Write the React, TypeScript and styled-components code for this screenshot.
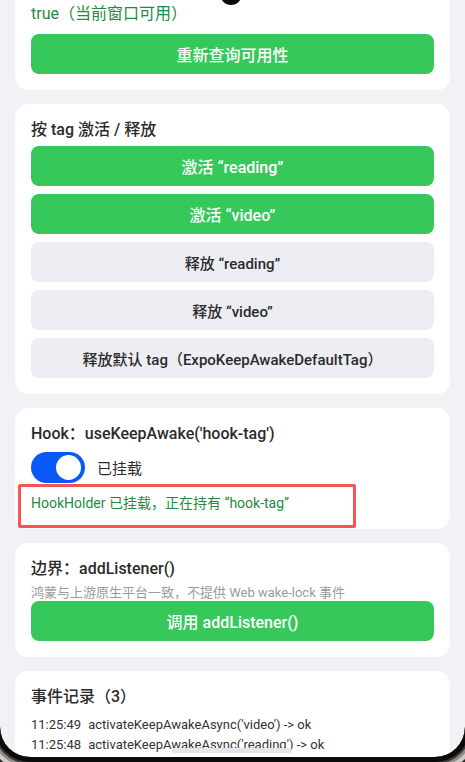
import React, { useState } from 'react';
import styled, { createGlobalStyle } from 'styled-components';

const GlobalStyle = createGlobalStyle`
  html, body {
    margin: 0;
    padding: 0;
    background: #f1f1f6;
    font-family: Roboto, "Noto Sans CJK SC", sans-serif;
    color: #333333;
    overflow: hidden;
  }
  * { box-sizing: border-box; }
`;

const logs = [
  { time: '11:25:49', text: "activateKeepAwakeAsync('video') -> ok" },
  { time: '11:25:48', text: "activateKeepAwakeAsync('reading') -> ok" },
  { time: '11:25:08', text: 'isAvailableAsync() -> true' },
];

const App: React.FC = () => {
  const [mounted, setMounted] = useState<boolean>(true);

  return (
    <>
      <GlobalStyle />
      <Page>
        <Card>
          <StatusText>true（当前窗口可用）</StatusText>
          <Button>重新查询可用性</Button>
        </Card>

        <Card>
          <Title>按 tag 激活 / 释放</Title>
          <ButtonStack>
            <Button>激活 “reading”</Button>
            <Button>激活 “video”</Button>
            <Button $variant="gray">释放 “reading”</Button>
            <Button $variant="gray">释放 “video”</Button>
            <Button $variant="gray">释放默认 tag（ExpoKeepAwakeDefaultTag）</Button>
          </ButtonStack>
        </Card>

        <Card>
          <Title>Hook：useKeepAwake('hook-tag')</Title>
          <ToggleRow>
            <Toggle $on={mounted} onClick={() => setMounted(!mounted)}>
              <Thumb $on={mounted} />
            </Toggle>
            <ToggleLabel>{mounted ? '已挂载' : '未挂载'}</ToggleLabel>
          </ToggleRow>
          <HookStatus>
            <Highlight />
            <StatusText>HookHolder 已挂载，正在持有 “hook-tag”</StatusText>
          </HookStatus>
        </Card>

        <Card>
          <Title>边界：addListener()</Title>
          <Hint>鸿蒙与上游原生平台一致，不提供 Web wake-lock 事件</Hint>
          <Button>调用 addListener()</Button>
        </Card>

        <Card>
          <Title>事件记录（3）</Title>
          <LogList>
            {logs.map((l) => (
              <LogLine key={l.time}>
                <span>{l.time}</span>
                <span>{l.text}</span>
              </LogLine>
            ))}
          </LogList>
        </Card>
      </Page>

      <Camera />
      <HomeBar />
      <Frame />
    </>
  );
};

export default App;

const Page = styled.div`
  display: flex;
  flex-direction: column;
  gap: 14px;
  padding: 0 15px 40px;
  margin-top: -12px;
`;

const Card = styled.div`
  background: #ffffff;
  border-radius: 13px;
  padding: 16px;
  display: flex;
  flex-direction: column;
`;

const Title = styled.div`
  font-size: 16px;
  line-height: 20px;
  font-weight: 500;
  color: #2b2b2b;
`;

const StatusText = styled.div`
  font-size: 16px;
  line-height: 20px;
  color: #1e8a43;
`;

const Button = styled.button<{ $variant?: 'green' | 'gray' }>`
  width: 100%;
  height: 40px;
  border: none;
  border-radius: 8px;
  font-family: inherit;
  font-size: ${(p) => (p.$variant === 'gray' ? '15px' : '16px')};
  font-weight: 500;
  color: ${(p) => (p.$variant === 'gray' ? '#2b2b2b' : '#ffffff')};
  background: ${(p) => (p.$variant === 'gray' ? '#edeef3' : '#37c85c')};
  cursor: pointer;
  ${StatusText} + & {
    margin-top: 10px;
  }
`;

const ButtonStack = styled.div`
  display: flex;
  flex-direction: column;
  gap: 8px;
  margin-top: 6px;
`;

const ToggleRow = styled.div`
  display: flex;
  align-items: center;
  gap: 12px;
  margin-top: 8px;
`;

const Toggle = styled.div<{ $on: boolean }>`
  position: relative;
  width: 54px;
  height: 31px;
  border-radius: 16px;
  background: ${(p) => (p.$on ? '#0a59f7' : '#d8d8dc')};
  cursor: pointer;
`;

const Thumb = styled.div<{ $on: boolean }>`
  position: absolute;
  top: 3px;
  left: ${(p) => (p.$on ? '25px' : '3px')};
  width: 25px;
  height: 25px;
  border-radius: 50%;
  background: #ffffff;
`;

const ToggleLabel = styled.span`
  font-size: 15px;
  color: #2b2b2b;
`;

const HookStatus = styled.div`
  position: relative;
  margin-top: 10px;
  ${StatusText} {
    font-size: 14px;
  }
`;

const Highlight = styled.div`
  position: absolute;
  top: -9px;
  left: -13px;
  width: 338px;
  height: 44px;
  border: 3px solid #f25555;
  border-radius: 2px;
`;

const Hint = styled.div`
  margin-top: 6px;
  font-size: 13px;
  line-height: 16px;
  color: #9a9a9e;
`;

const LogList = styled.div`
  margin-top: 8px;
  display: flex;
  flex-direction: column;
`;

const LogLine = styled.div`
  display: flex;
  gap: 7px;
  font-size: 13px;
  line-height: 20px;
  color: #333333;
`;

const Camera = styled.div`
  position: fixed;
  top: -17px;
  left: 220px;
  width: 22px;
  height: 22px;
  border-radius: 50%;
  background: #0a0a0a;
`;

const HomeBar = styled.div`
  position: fixed;
  bottom: 9px;
  left: 172px;
  width: 120px;
  height: 5px;
  border-radius: 3px;
  background: #e6e6ea;
`;

const Frame = styled.div`
  position: fixed;
  top: -60px;
  left: 0;
  right: 0;
  bottom: 5px;
  border-radius: 0 0 30px 30px;
  pointer-events: none;
  box-shadow: 0 0 0 5px #0b0b0b, 0 0 0 7px #3c3a37, 0 0 0 10px #8f8b85,
    0 0 0 14px #cfcac3, 0 0 0 60px #2a2825;
`;
